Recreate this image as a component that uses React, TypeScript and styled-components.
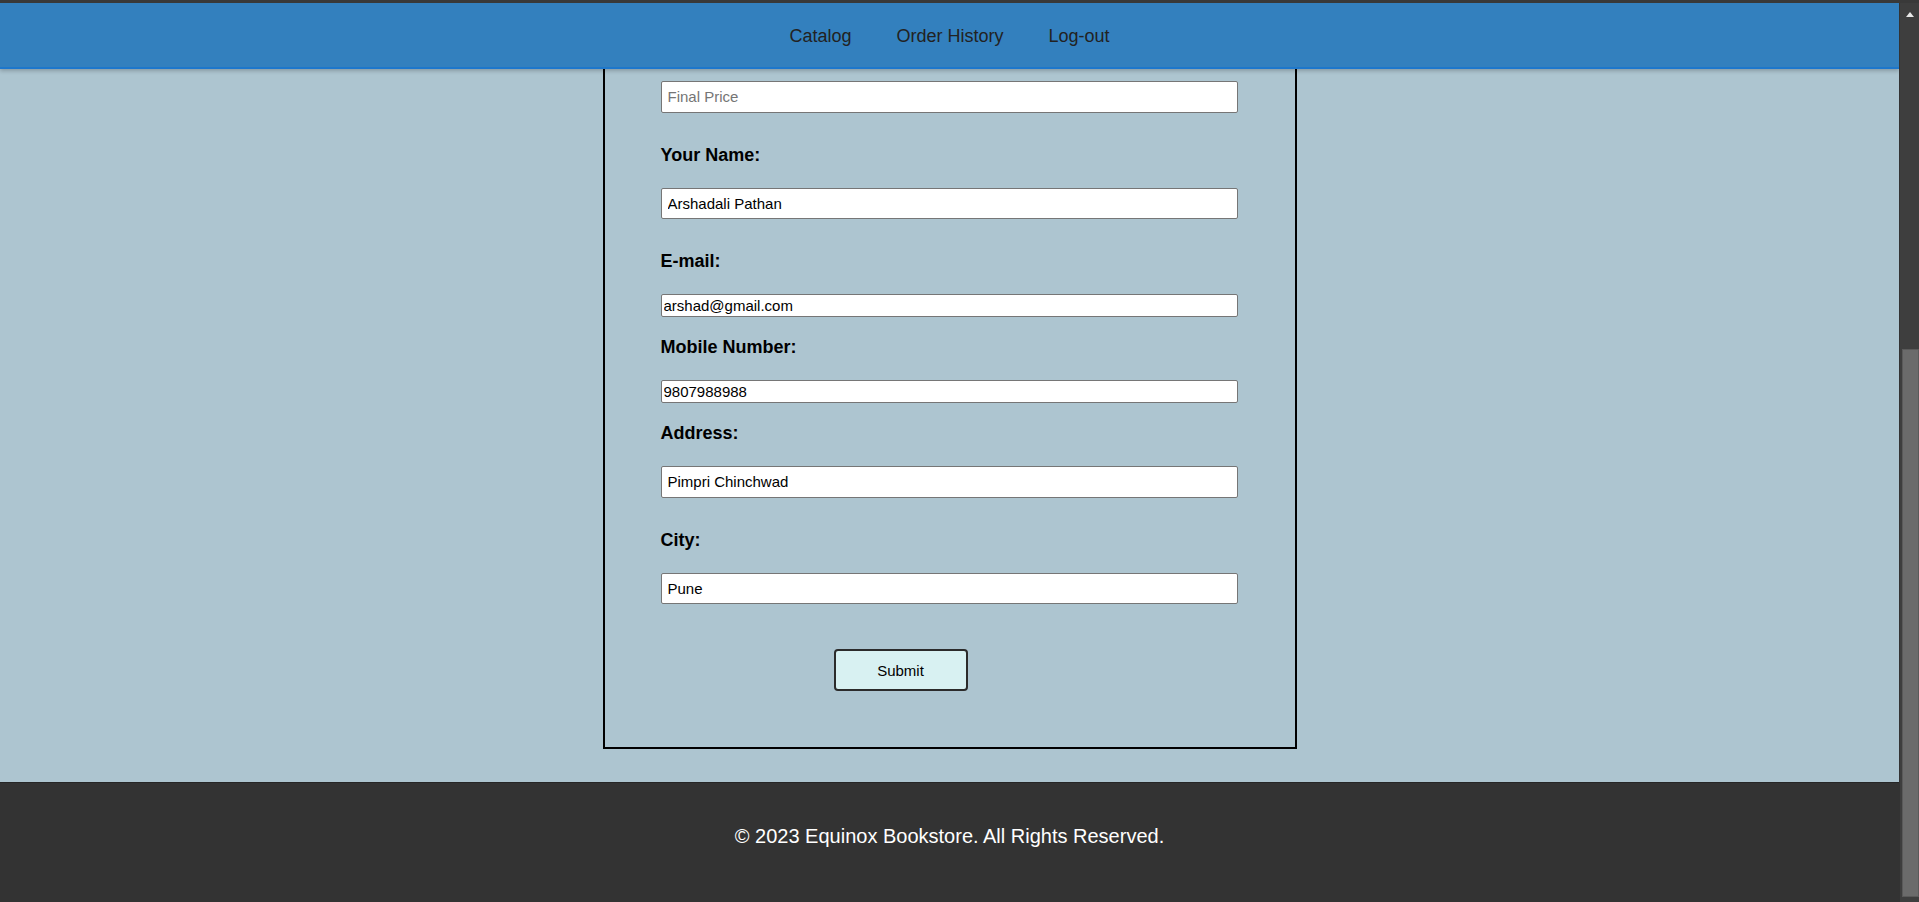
import React from "react";
import styled, { createGlobalStyle } from "styled-components";

const GlobalStyle = createGlobalStyle`
  html, body {
    margin: 0;
    padding: 0;
    height: 100%;
    overflow: hidden;
  }
  body {
    font-family: "Liberation Sans", Arial, Helvetica, sans-serif;
  }
  * { box-sizing: border-box; }
`;

const Frame = styled.div`
  height: 902px;
  display: flex;
  flex-direction: column;
  overflow: hidden;
  background: #3e3e3e;
`;

const TopStrip = styled.div`
  flex: none;
  height: 3px;
  background: #393939;
`;

const Viewport = styled.div`
  flex: 1;
  min-height: 0;
  display: flex;
`;

const Page = styled.div`
  flex: 1;
  min-width: 0;
  display: flex;
  flex-direction: column;
  overflow: hidden;
`;

const Header = styled.header`
  flex: none;
  position: relative;
  z-index: 2;
  height: 66px;
  padding-top: 2px;
  background: #3380be;
  border-bottom: 2px solid #1d77cc;
  box-shadow: 0 2px 4px rgba(0, 0, 0, 0.22);
  display: flex;
  align-items: center;
  justify-content: center;
  gap: 45px;
`;

const NavLink = styled.a`
  font-size: 18px;
  line-height: 21px;
  color: #222;
  text-decoration: none;
`;

const Main = styled.main`
  flex: none;
  background: #adc5d0;
  display: flex;
  justify-content: center;
  padding-bottom: 33px;
`;

const Card = styled.div`
  width: 694px;
  border: 2px solid #000;
  border-top: none;
  padding: 12px 57px 56px 56px;
`;

const Form = styled.form`
  display: flex;
  flex-direction: column;
`;

const Label = styled.label`
  display: block;
  font-size: 18px;
  line-height: 21px;
  font-weight: bold;
  color: #000;
  margin-bottom: 22px;
`;

const Field = styled.input<{ $short?: boolean }>`
  display: block;
  width: 100%;
  height: ${(p) => (p.$short ? "22.5px" : "31.5px")};
  padding: ${(p) => (p.$short ? "1px 2px" : "0 6px")};
  margin: 0 0 ${(p) => (p.$short ? "20.6px" : "32px")};
  font-family: "Liberation Sans", Arial, sans-serif;
  font-size: 15px;
  color: #000;
  background: #fff;
  border: 1px solid #767676;
  border-radius: 2px;
  outline: none;

  &::placeholder {
    color: #757575;
  }
`;

const ButtonRow = styled.div`
  display: flex;
  padding-left: 173px;
  margin-top: 13px;
`;

const SubmitButton = styled.button`
  width: 134px;
  height: 42px;
  background: #d8f1f2;
  border: 2px solid #2b2b2b;
  border-radius: 4px;
  font-family: "Liberation Sans", Arial, sans-serif;
  font-size: 15px;
  color: #000;
  cursor: pointer;
`;

const Footer = styled.footer`
  flex: 1;
  background: #333333;
  border-top: 1px solid #262626;
  padding-top: 42px;
  text-align: center;
`;

const FooterText = styled.p`
  margin: 0;
  font-size: 20px;
  line-height: 23px;
  color: #fff;
`;

const Scrollbar = styled.div`
  flex: none;
  width: 20px;
  background: #3e3e3e;
  border-left: 1px solid #333;
  display: flex;
  flex-direction: column;
  align-items: center;
`;

const ArrowUp = styled.div`
  margin-top: 9px;
  width: 0;
  height: 0;
  border-left: 4px solid transparent;
  border-right: 4px solid transparent;
  border-bottom: 5px solid #e8e8e8;
`;

const Thumb = styled.div`
  margin-top: 332px;
  width: 17px;
  height: 548px;
  background: #6b6b6b;
  border: 1px solid #5a5a5a;
  margin-left: 1px;
`;

export default function App() {
  return (
    <>
      <GlobalStyle />
      <Frame>
        <TopStrip />
        <Viewport>
          <Page>
            <Header>
              <NavLink href="#">Catalog</NavLink>
              <NavLink href="#">Order History</NavLink>
              <NavLink href="#">Log-out</NavLink>
            </Header>
            <Main>
              <Card>
                <Form onSubmit={(e) => e.preventDefault()}>
                  <Field type="text" placeholder="Final Price" readOnly />
                  <Label>Your Name:</Label>
                  <Field type="text" defaultValue="Arshadali Pathan" />
                  <Label>E-mail:</Label>
                  <Field $short type="email" defaultValue="arshad@gmail.com" />
                  <Label>Mobile Number:</Label>
                  <Field $short type="tel" defaultValue="9807988988" />
                  <Label>Address:</Label>
                  <Field type="text" defaultValue="Pimpri Chinchwad" />
                  <Label>City:</Label>
                  <Field type="text" defaultValue="Pune" />
                  <ButtonRow>
                    <SubmitButton type="submit">Submit</SubmitButton>
                  </ButtonRow>
                </Form>
              </Card>
            </Main>
            <Footer>
              <FooterText>© 2023 Equinox Bookstore. All Rights Reserved.</FooterText>
            </Footer>
          </Page>
          <Scrollbar>
            <ArrowUp />
            <Thumb />
          </Scrollbar>
        </Viewport>
      </Frame>
    </>
  );
}
